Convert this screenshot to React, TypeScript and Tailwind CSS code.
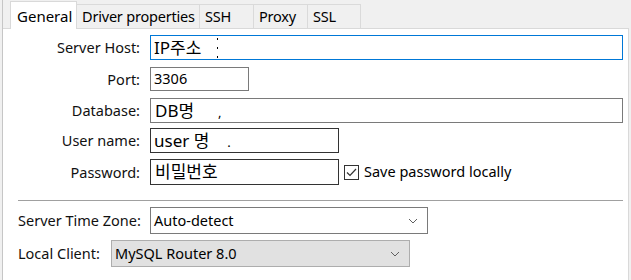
import React from 'react';

// Connection settings — General tab

const FONT = "font-['Noto_Sans','Noto_Sans_CJK_KR',sans-serif]";

const TABS = [
  { label: 'General', w: 'w-[67px]' },
  { label: 'Driver properties', w: 'w-[123px]' },
  { label: 'SSH', w: 'w-[54px]' },
  { label: 'Proxy', w: 'w-[54px]' },
  { label: 'SSL', w: 'w-[53px]' },
];

function Chevron() {
  return (
    <svg width="10" height="6" viewBox="0 0 10 6" className="shrink-0">
      <path d="M1 1 L5 5 L9 1" fill="none" stroke="#606060" strokeWidth="1" />
    </svg>
  );
}

function Label({ children }: { readonly children: React.ReactNode }) {
  return (
    <div className="w-[122px] shrink-0 text-right text-[14.5px] text-[#111] leading-none whitespace-nowrap">
      {children}
    </div>
  );
}

export default function App() {
  return (
    <div className={`${FONT} w-[631px] h-[280px] bg-[#f0f0f0] overflow-hidden pl-[2px]`}>
      <div className="h-full border-l border-[#c6c6c6] flex flex-col">
        {/* Tabs */}
        <div className="h-[28px] flex items-end pl-[7px] shrink-0">
          {TABS.map((t, i) =>
            i === 0 ? (
              <div
                key={t.label}
                className={`${t.w} h-[28px] -mb-px relative z-10 bg-white border-l border-t border-r border-[#d9d9d9] pl-[6px] pt-[3px] text-[15px] text-black whitespace-nowrap`}
              >
                {t.label}
              </div>
            ) : (
              <div
                key={t.label}
                className={`${t.w} h-[24px] bg-[#f0f0f0] border-t border-r border-[#dadada] pl-[5px] pt-[1px] text-[14.5px] tracking-[-0.2px] text-black whitespace-nowrap overflow-hidden`}
              >
                {t.label}
              </div>
            )
          )}
        </div>

        {/* Panel */}
        <div className="flex-1 mr-[2px] bg-white border-t border-r border-[#d9d9d9] pl-[15px] pr-[5px] pt-[6px] flex flex-col">
          <div className="flex items-center gap-[10px] h-[25px]">
            <Label>Server Host:</Label>
            <div className="flex-1 h-full border border-[#0078d7] flex items-center pl-[3px] text-[17px] text-black">
              <span>IP주소</span>
              <span className="ml-[16px] h-[20px] flex flex-col justify-between">
                <span className="w-px h-[2px] bg-black" />
                <span className="w-px h-[2px] bg-black" />
                <span className="w-px h-[2px] bg-black" />
              </span>
            </div>
          </div>

          <div className="flex items-center gap-[10px] h-[24px] mt-[7px]">
            <Label>Port:</Label>
            <div className="w-[99px] h-full border border-[#7a7a7a] flex items-center pl-[3px] text-[14.5px] text-black">
              3306
            </div>
          </div>

          <div className="flex items-center gap-[10px] h-[25px] mt-[7px]">
            <Label>Database:</Label>
            <div className="flex-1 h-full border border-[#7a7a7a] flex items-center pl-[4px] text-[17px] text-black">
              <span>DB명</span>
              <span className="ml-[24px] text-[13px] mt-[4px]">,</span>
            </div>
          </div>

          <div className="flex items-center gap-[10px] h-[25px] mt-[5px]">
            <Label>User name:</Label>
            <div className="w-[189px] h-full border border-[#333] flex items-center pl-[3px] text-[17px] text-black">
              <span>user 명</span>
              <span className="ml-[18px] text-[13px] mt-[4px]">.</span>
            </div>
          </div>

          <div className="flex items-center gap-[10px] h-[26px] mt-[6px]">
            <Label>Password:</Label>
            <div className="w-[189px] h-full border border-[#333] flex items-center pl-[4px] text-[17px] text-black">
              비밀번호
            </div>
            <label className="flex items-center gap-[5px] -ml-[5px] text-[14.5px] text-black whitespace-nowrap">
              <span className="w-[15px] h-[15px] border border-[#333] bg-white flex items-center justify-center">
                <svg width="11" height="9" viewBox="0 0 11 9">
                  <path d="M1 4.5 L4 7.5 L10 1" fill="none" stroke="#333" strokeWidth="1.2" />
                </svg>
              </span>
              Save password locally
            </label>
          </div>

          <div className="h-px bg-[#a0a0a0] mt-[15px]" />

          <div className="flex items-center gap-[10px] h-[27px] mt-[6px]">
            <div className="w-[122px] shrink-0 text-[14.5px] text-[#111] leading-none whitespace-nowrap">
              Server Time Zone:
            </div>
            <div className="w-[278px] h-full border border-[#7a7a7a] bg-white flex items-center justify-between pl-[3px] pr-[9px] text-[14.5px] text-black">
              <span>Auto-detect</span>
              <Chevron />
            </div>
          </div>

          <div className="flex items-center gap-[10px] h-[27px] mt-[6px]">
            <div className="w-[83px] shrink-0 text-[14.5px] text-[#111] leading-none whitespace-nowrap">
              Local Client:
            </div>
            <div className="w-[299px] h-full border border-[#adadad] bg-[#e1e1e1] flex items-center justify-between pl-[3px] pr-[9px] text-[14.5px] text-black">
              <span>MySQL Router 8.0</span>
              <Chevron />
            </div>
          </div>
        </div>
      </div>
    </div>
  );
}
